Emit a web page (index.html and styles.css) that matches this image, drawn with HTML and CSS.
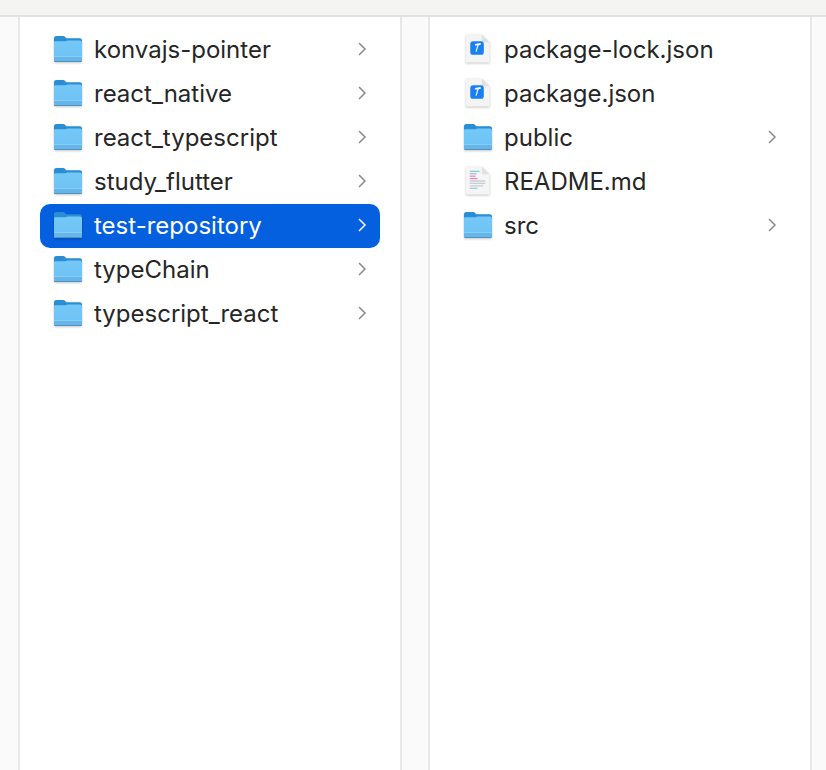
FILE: index.html
```html
<!DOCTYPE html>
<html lang="en">
<head>
  <meta charset="UTF-8">
  <title>Finder columns</title>
  <link rel="stylesheet" href="styles.css">
</head>
<body>
  <svg class="defs" width="0" height="0">
    <defs>
      <linearGradient id="folderFront" x1="0" y1="0" x2="0" y2="1">
        <stop offset="0" stop-color="#74c9f8"/>
        <stop offset="1" stop-color="#6cc0f3"/>
      </linearGradient>
      <symbol id="folder" viewBox="0 0 30 28">
        <path d="M1 3.500C1 1.800 2 1 3.500 1h6.300c1 0 1.600.3 2.300 1l1.200 1.200H26.500C28 3.200 29 4 29 5.500V12H1z" fill="#2b8ed4"/>
        <path d="M1 7.500C1 6.700 1.600 6.200 2.400 6.200H12.500c.8 0 1.300-.3 1.800-.7h12.300C28 5.500 29 6.300 29 7.700V25c0 1.300-.8 2-2 2H3c-1.200 0-2-.7-2-2z" fill="url(#folderFront)"/>
        <path d="M1 21.500h28V25c0 1.300-.8 2-2 2H3c-1.200 0-2-.7-2-2z" fill="#66b6ea"/>
        <rect x="1" y="21" width="28" height="1" fill="#85cff6"/>
        <path d="M1.500 26.500h27" stroke="#4f93c4" stroke-width="1"/>
      </symbol>
      <symbol id="chevron" viewBox="0 0 10 14">
        <path d="M2 1L8 7l-6 6" fill="none" stroke="currentColor" stroke-width="1.500"/>
      </symbol>
      <symbol id="jsonFile" viewBox="1.500 1 26 31">
        <path d="M2 1.500h16.500L26.500 9.500V30.500H2z" fill="#f4f4f4"/>
        <path d="M18.500 1.500V9.500H26.500z" fill="#e0e0e0"/>
        <rect x="6.500" y="8.500" width="14" height="14" rx="3" fill="#1a7ff2"/>
        <path d="M11.500 12.200l5.800-.9" fill="none" stroke="#fff" stroke-width="1.800"/>
        <path d="M14.800 11.800l-2.300 7.400" fill="none" stroke="#fff" stroke-width="1.200"/>
      </symbol>
      <symbol id="mdFile" viewBox="1.500 1 26 31">
        <path d="M2 1.500h16.500L26.500 9.500V30.500H2z" fill="#f5f5f5"/>
        <path d="M18.500 1.500V9.500H26.500z" fill="#e2e2e2"/>
        <path d="M6 6.500h10" stroke="#7fcab9" stroke-width="1.200"/>
        <path d="M6 9h7" stroke="#9db4de" stroke-width="1.200"/>
        <path d="M6 11.500h6" stroke="#e97fb8" stroke-width="1.200"/>
        <path d="M6 14h8" stroke="#e97fb8" stroke-width="1.200"/>
        <path d="M6 16.500h16M6 19h16M6 21.500h14" stroke="#c6ced4" stroke-width="1.400"/>
        <path d="M6 24h8" stroke="#9cc0e6" stroke-width="1.200"/>
      </symbol>
    </defs>
  </svg>

  <div class="topbar"></div>

  <div class="browser">
    <div class="gutter gutter-first"></div>

    <ul class="column">
      <li class="row">
        <svg class="icon"><use href="#folder"/></svg>
        <span class="name">konvajs-pointer</span>
        <svg class="chevron"><use href="#chevron"/></svg>
      </li>
      <li class="row">
        <svg class="icon"><use href="#folder"/></svg>
        <span class="name">react_native</span>
        <svg class="chevron"><use href="#chevron"/></svg>
      </li>
      <li class="row">
        <svg class="icon"><use href="#folder"/></svg>
        <span class="name">react_typescript</span>
        <svg class="chevron"><use href="#chevron"/></svg>
      </li>
      <li class="row">
        <svg class="icon"><use href="#folder"/></svg>
        <span class="name">study_flutter</span>
        <svg class="chevron"><use href="#chevron"/></svg>
      </li>
      <li class="row selected">
        <svg class="icon"><use href="#folder"/></svg>
        <span class="name">test-repository</span>
        <svg class="chevron"><use href="#chevron"/></svg>
      </li>
      <li class="row">
        <svg class="icon"><use href="#folder"/></svg>
        <span class="name">typeChain</span>
        <svg class="chevron"><use href="#chevron"/></svg>
      </li>
      <li class="row">
        <svg class="icon"><use href="#folder"/></svg>
        <span class="name">typescript_react</span>
        <svg class="chevron"><use href="#chevron"/></svg>
      </li>
    </ul>

    <div class="gutter"></div>

    <ul class="column">
      <li class="row">
        <svg class="icon"><use href="#jsonFile"/></svg>
        <span class="name">package-lock.json</span>
      </li>
      <li class="row">
        <svg class="icon"><use href="#jsonFile"/></svg>
        <span class="name">package.json</span>
      </li>
      <li class="row">
        <svg class="icon"><use href="#folder"/></svg>
        <span class="name">public</span>
        <svg class="chevron"><use href="#chevron"/></svg>
      </li>
      <li class="row">
        <svg class="icon"><use href="#mdFile"/></svg>
        <span class="name">README.md</span>
      </li>
      <li class="row">
        <svg class="icon"><use href="#folder"/></svg>
        <span class="name">src</span>
        <svg class="chevron"><use href="#chevron"/></svg>
      </li>
    </ul>

    <div class="gutter gutter-last"></div>
  </div>
</body>
</html>
```

FILE: styles.css
```css
html, body {
  margin: 0;
  padding: 0;
  height: 100%;
  overflow: hidden;
}

body {
  font-family: "Inter", "Liberation Sans", sans-serif;
  font-size: 24px;
  color: #262626;
  background: #fff;
  display: flex;
  flex-direction: column;
}

.defs {
  display: block;
  height: 0;
}

.topbar {
  height: 15px;
  flex: none;
  background: #f4f4f2;
  border-bottom: 2px solid #e2e2e0;
}

.browser {
  flex: 1;
  display: grid;
  grid-template-columns: 20px 380px 30px 380px 1fr;
}

.gutter {
  background: #fafafa;
  border-left: 2px solid #e8e8e8;
  border-right: 2px solid #e8e8e8;
}

.gutter-first {
  border-left: none;
}

.gutter-last {
  border-right: none;
}

.column {
  list-style: none;
  margin: 0;
  padding: 11px 20px 0;
}

.row {
  box-sizing: border-box;
  height: 44px;
  display: flex;
  align-items: center;
  border-radius: 10px;
  padding: 0 14px 2px 13px;
}

.row.selected {
  background: #0560e0;
  color: #fff;
}

.icon {
  width: 30px;
  height: 30px;
  flex: none;
  margin-right: 11px;
  filter: drop-shadow(0 1px 1px rgba(0, 0, 0, 0.22));
}

.name {
  flex: 1;
  white-space: nowrap;
}

.chevron {
  width: 10px;
  height: 14px;
  flex: none;
  color: #8a8a8a;
  margin-right: -1px;
}

.row.selected .chevron {
  color: #fff;
}
```
